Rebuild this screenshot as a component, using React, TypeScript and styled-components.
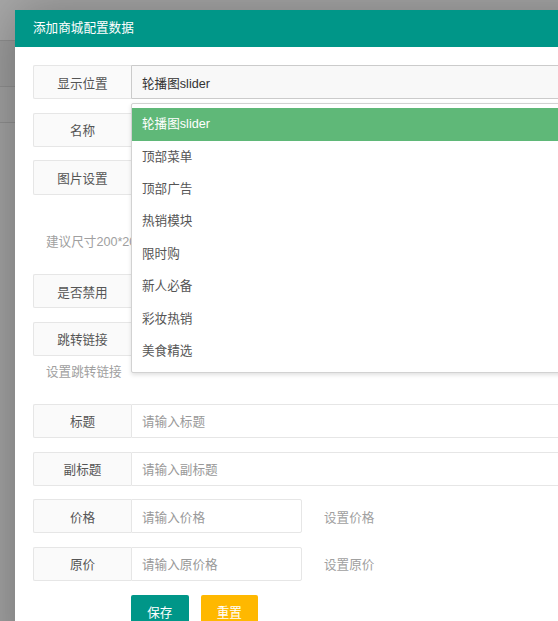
import React from "react"
import styled, { createGlobalStyle } from "styled-components"

const GlobalStyle = createGlobalStyle`
  html, body {
    margin: 0;
    padding: 0;
    height: 100%;
    overflow: hidden;
  }
  body {
    font-family: "Liberation Sans", "Noto Sans CJK SC", sans-serif;
    font-size: 12.6px;
    color: #333;
  }
`

const Screen = styled.div`
  position: relative;
  width: 100vw;
  height: 100vh;
  overflow: hidden;
  background: #a2a2a2;
`

const Backdrop = styled.div`
  display: flex;
  flex-direction: column;
`

const Band = styled.div<{ $h: number; $bg: string }>`
  height: ${(p) => p.$h}px;
  background: ${(p) => p.$bg};
  border-bottom: 1px solid #8f8f8f;
`

const Modal = styled.div`
  position: absolute;
  left: 15px;
  top: 10px;
  width: 620px;
  height: 660px;
  background: #fff;
  box-shadow: 1px 1px 50px rgba(0, 0, 0, 0.3);
`

const Header = styled.div`
  height: 37px;
  line-height: 37px;
  padding-left: 18px;
  background: #009688;
  color: #fff;
  font-size: 12.6px;
`

const Body = styled.div`
  display: flex;
  flex-direction: column;
  padding: 18px 0 0 18px;
`

const Row = styled.div<{ $gap?: number }>`
  position: relative;
  display: flex;
  align-items: center;
  height: 34.2px;
  margin-bottom: ${(p) => p.$gap ?? 13.5}px;
`

const Label = styled.div`
  box-sizing: border-box;
  flex: none;
  width: 98px;
  height: 100%;
  display: flex;
  align-items: center;
  justify-content: center;
  background: #fafafa;
  border: 1px solid #e6e6e6;
  border-right: none;
  border-radius: 2px 0 0 2px;
  color: #555;
`

const Field = styled.div<{ $w?: number; $select?: boolean }>`
  box-sizing: border-box;
  height: 100%;
  ${(p) => (p.$w ? `width: ${p.$w}px; flex: none;` : "flex: 1;")}
  display: flex;
  align-items: center;
  padding-left: 10px;
  background: ${(p) => (p.$select ? "#f8f8f8" : "#fff")};
  border: 1px solid ${(p) => (p.$select ? "#cbcbcb" : "#e6e6e6")};
  border-radius: 0 2px 2px 0;
  color: ${(p) => (p.$select ? "#333" : "#999")};
`

const Aux = styled.div`
  margin-left: 22px;
  color: #a0a0a0;
`

const Hint = styled.div<{ $gap: number }>`
  height: 20px;
  line-height: 20px;
  padding-left: 13px;
  margin-bottom: ${(p) => p.$gap}px;
  color: #a0a0a0;
  white-space: nowrap;
`

const Dropdown = styled.div`
  position: absolute;
  left: 98px;
  right: 0;
  top: calc(100% + 3.6px);
  z-index: 10;
  box-sizing: border-box;
  padding: 4.5px 0;
  background: #fff;
  border: 1px solid #d2d2d2;
  border-radius: 2px;
  box-shadow: 0 2px 4px rgba(0, 0, 0, 0.12);
`

const Option = styled.div<{ $active?: boolean }>`
  height: 32.4px;
  line-height: 32.4px;
  padding-left: 10px;
  background: ${(p) => (p.$active ? "#5fb878" : "transparent")};
  color: ${(p) => (p.$active ? "#fff" : "#555")};
`

const Actions = styled.div`
  display: flex;
  gap: 12px;
  margin-left: 98px;
`

const Button = styled.button<{ $tone: "primary" | "warm" }>`
  height: 34.2px;
  padding: 0 16.2px;
  border: none;
  border-radius: 2px;
  font-family: inherit;
  font-size: 12.6px;
  color: #fff;
  background: ${(p) => (p.$tone === "primary" ? "#009688" : "#ffb800")};
`

const positions = ["轮播图slider", "顶部菜单", "顶部广告", "热销模块", "限时购", "新人必备", "彩妆热销", "美食精选"]

export default function App() {
  return (
    <>
      <GlobalStyle />
      <Screen>
        <Backdrop>
          <Band $h={40} $bg="#a8a8a8" />
          <Band $h={45} $bg="#9c9c9c" />
          <Band $h={35} $bg="#a0a0a0" />
        </Backdrop>
        <Modal>
          <Header>添加商城配置数据</Header>
          <Body>
            <Row>
              <Label>显示位置</Label>
              <Field $select>轮播图slider</Field>
              <Dropdown>
                {positions.map((name, i) => (
                  <Option key={name} $active={i === 0}>
                    {name}
                  </Option>
                ))}
              </Dropdown>
            </Row>
            <Row>
              <Label>名称</Label>
              <Field />
            </Row>
            <Row $gap={37.4}>
              <Label>图片设置</Label>
              <Field />
            </Row>
            <Hint $gap={22}>建议尺寸200*200</Hint>
            <Row>
              <Label>是否禁用</Label>
              <Field />
            </Row>
            <Row $gap={6}>
              <Label>跳转链接</Label>
              <Field />
            </Row>
            <Hint $gap={22}>设置跳转链接</Hint>
            <Row>
              <Label>标题</Label>
              <Field>请输入标题</Field>
            </Row>
            <Row>
              <Label>副标题</Label>
              <Field>请输入副标题</Field>
            </Row>
            <Row>
              <Label>价格</Label>
              <Field $w={171}>请输入价格</Field>
              <Aux>设置价格</Aux>
            </Row>
            <Row $gap={13.7}>
              <Label>原价</Label>
              <Field $w={171}>请输入原价格</Field>
              <Aux>设置原价</Aux>
            </Row>
            <Actions>
              <Button $tone="primary">保存</Button>
              <Button $tone="warm">重置</Button>
            </Actions>
          </Body>
        </Modal>
      </Screen>
    </>
  )
}
